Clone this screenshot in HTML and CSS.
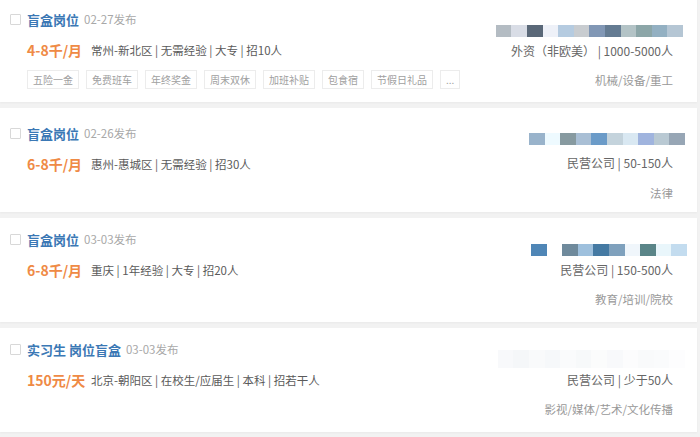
FILE: index.html
```html
<!DOCTYPE html>
<html lang="zh-CN">
<head>
<meta charset="utf-8">
<title>岗位列表</title>
<link rel="stylesheet" href="styles.css">
</head>
<body>
<div class="list">
  <div class="card">
    <div class="left">
      <div class="row-title"><span class="cb"></span><span class="title">盲盒岗位</span><span class="date">02-27发布</span></div>
      <div class="row-info"><span class="salary">4-8千/月</span><span class="info">常州-新北区 | 无需经验 | 大专 | 招10人</span></div>
      <div class="tags"><span class="tag">五险一金</span><span class="tag">免费班车</span><span class="tag">年终奖金</span><span class="tag">周末双休</span><span class="tag">加班补贴</span><span class="tag">包食宿</span><span class="tag">节假日礼品</span><span class="tag more">...</span></div>
    </div>
    <div class="right">
      <div class="logo">
        <i style="background:#b4bcc3"></i><i style="background:#d9dde6"></i><i style="background:#5a6878"></i><i style="background:#eef1f8"></i><i style="background:#b5cbe0"></i><i style="background:#c8ccd0"></i><i style="background:#8197b5"></i><i style="background:#647b92"></i><i style="background:#b3c3c6"></i><i style="background:#8ca6a8"></i><i style="background:#93b0c2"></i><i style="background:#b5c6d4"></i>
      </div>
      <div class="company">外资（非欧美） | 1000-5000人</div>
      <div class="industry">机械/设备/重工</div>
    </div>
  </div>

  <div class="card c2">
    <div class="left">
      <div class="row-title"><span class="cb"></span><span class="title">盲盒岗位</span><span class="date">02-26发布</span></div>
      <div class="row-info"><span class="salary">6-8千/月</span><span class="info">惠州-惠城区 | 无需经验 | 招30人</span></div>
    </div>
    <div class="right">
      <div class="logo l2">
        <i style="background:#99b3cb"></i><i style="background:#eefaff"></i><i style="background:#879aa0"></i><i style="background:#a9bfd5"></i><i style="background:#6b9bc8"></i><i style="background:#c4d3dc"></i><i style="background:#d9e8f2"></i><i style="background:#a0b4de"></i><i style="background:#b9c9d3"></i><i style="background:#97a6b5"></i>
      </div>
      <div class="company">民营公司 | 50-150人</div>
      <div class="industry">法律</div>
    </div>
  </div>

  <div class="card">
    <div class="left">
      <div class="row-title"><span class="cb"></span><span class="title">盲盒岗位</span><span class="date">03-03发布</span></div>
      <div class="row-info"><span class="salary">6-8千/月</span><span class="info">重庆 | 1年经验 | 大专 | 招20人</span></div>
    </div>
    <div class="right">
      <div class="logo l3">
        <i style="background:#4f86b6"></i><i style="background:#ffffff"></i><i style="background:#6f8a9c"></i><i style="background:#9ec0dd"></i><i style="background:#457aa3"></i><i style="background:#7fa1bd"></i><i style="background:#f0f6fb"></i><i style="background:#5a8588"></i><i style="background:#e9f6fb"></i><i style="background:#c3dcef"></i>
      </div>
      <div class="company">民营公司 | 150-500人</div>
      <div class="industry">教育/培训/院校</div>
    </div>
  </div>

  <div class="card">
    <div class="left">
      <div class="row-title"><span class="cb"></span><span class="title">实习生 岗位盲盒</span><span class="date">03-03发布</span></div>
      <div class="row-info"><span class="salary">150元/天</span><span class="info">北京-朝阳区 | 在校生/应届生 | 本科 | 招若干人</span></div>
    </div>
    <div class="right">
      <div class="logo l4">
        <i style="background:#f8f9fb"></i><i style="background:#f5f7f9"></i><i style="background:#f9fafb"></i><i style="background:#f6f8fa"></i><i style="background:#fafbfc"></i><i style="background:#f7f9fa"></i><i style="background:#fbfcfc"></i><i style="background:#f8f9fb"></i><i style="background:#fcfcfd"></i><i style="background:#f9fafb"></i><i style="background:#fafbfc"></i><i style="background:#fdfdfe"></i>
      </div>
      <div class="company">民营公司 | 少于50人</div>
      <div class="industry">影视/媒体/艺术/文化传播</div>
    </div>
  </div>
</div>
</body>
</html>
```

FILE: styles.css
```css
* { box-sizing: border-box; }
html, body {
  margin: 0;
  padding: 0;
  width: 700px;
  height: 437px;
  overflow: hidden;
  background: #f2f2f2;
  font-family: "Noto Sans CJK SC", "Noto Sans", sans-serif;
}
.list {
  display: flex;
  flex-direction: column;
  gap: 6px;
  margin-top: -2px;
  padding-right: 3px;
}
.card {
  display: flex;
  justify-content: space-between;
  height: 104px;
  background: #fff;
  box-shadow: 0 1px 2px rgba(0,0,0,0.04);
}
.left {
  flex: 1 1 auto;
  min-width: 0;
  padding: 12px 0 0 10px;
}
.c2 .left { padding-top: 16px; }
.row-title {
  display: flex;
  align-items: center;
  height: 18px;
  white-space: nowrap;
}
.cb {
  width: 11px;
  height: 11px;
  border: 1px solid #d8d8d8;
  border-radius: 1px;
  margin-right: 6px;
  margin-top: 1px;
}
.title {
  font-size: 13px;
  font-weight: 600;
  color: #3b78b5;
  margin-right: 5px;
}
.date {
  font-size: 11.5px;
  color: #a8a8a8;
}
.row-info {
  display: flex;
  align-items: center;
  height: 20px;
  margin-top: 12px;
  padding-left: 17px;
  white-space: nowrap;
}
.salary {
  font-size: 14px;
  font-weight: 600;
  color: #ef8a45;
  width: 64px;
}
.info {
  font-size: 11.5px;
  color: #5a5a5a;
}
.tags {
  display: flex;
  gap: 7px;
  margin-top: 10px;
  padding-left: 17px;
}
.tag {
  height: 19px;
  line-height: 17px;
  padding: 0 5px;
  border: 1px solid #ececec;
  font-size: 10px;
  color: #a0a0a0;
  white-space: nowrap;
}
.tag.more {
  padding: 0 5px;
}
.right {
  flex: 0 0 auto;
  display: flex;
  flex-direction: column;
  align-items: flex-end;
  padding: 27px 24px 0 0;
  white-space: nowrap;
}
.logo {
  display: flex;
  height: 12px;
  margin-right: -10px;
}
.logo i {
  display: block;
  width: 15.6px;
  height: 12px;
}
.logo.l2 { margin-right: -12px; margin-top: -2px; height: 13px; }
.logo.l2 + .company { margin-top: 7px; }
.logo.l2 ~ .industry { margin-top: 10px; }
.logo.l3 { margin-right: -14px; margin-top: -1px; }
.logo.l4 { margin-right: -12px; height: 18px; margin-top: -5px; }
.logo.l4 i { height: 18px; }
.company {
  font-size: 12px;
  color: #666;
  line-height: 20px;
  margin-top: 4px;
}
.logo.l4 + .company { margin-top: 2px; }
.industry {
  font-size: 11.5px;
  color: #999;
  line-height: 20px;
  margin-top: 9px;
}
```
